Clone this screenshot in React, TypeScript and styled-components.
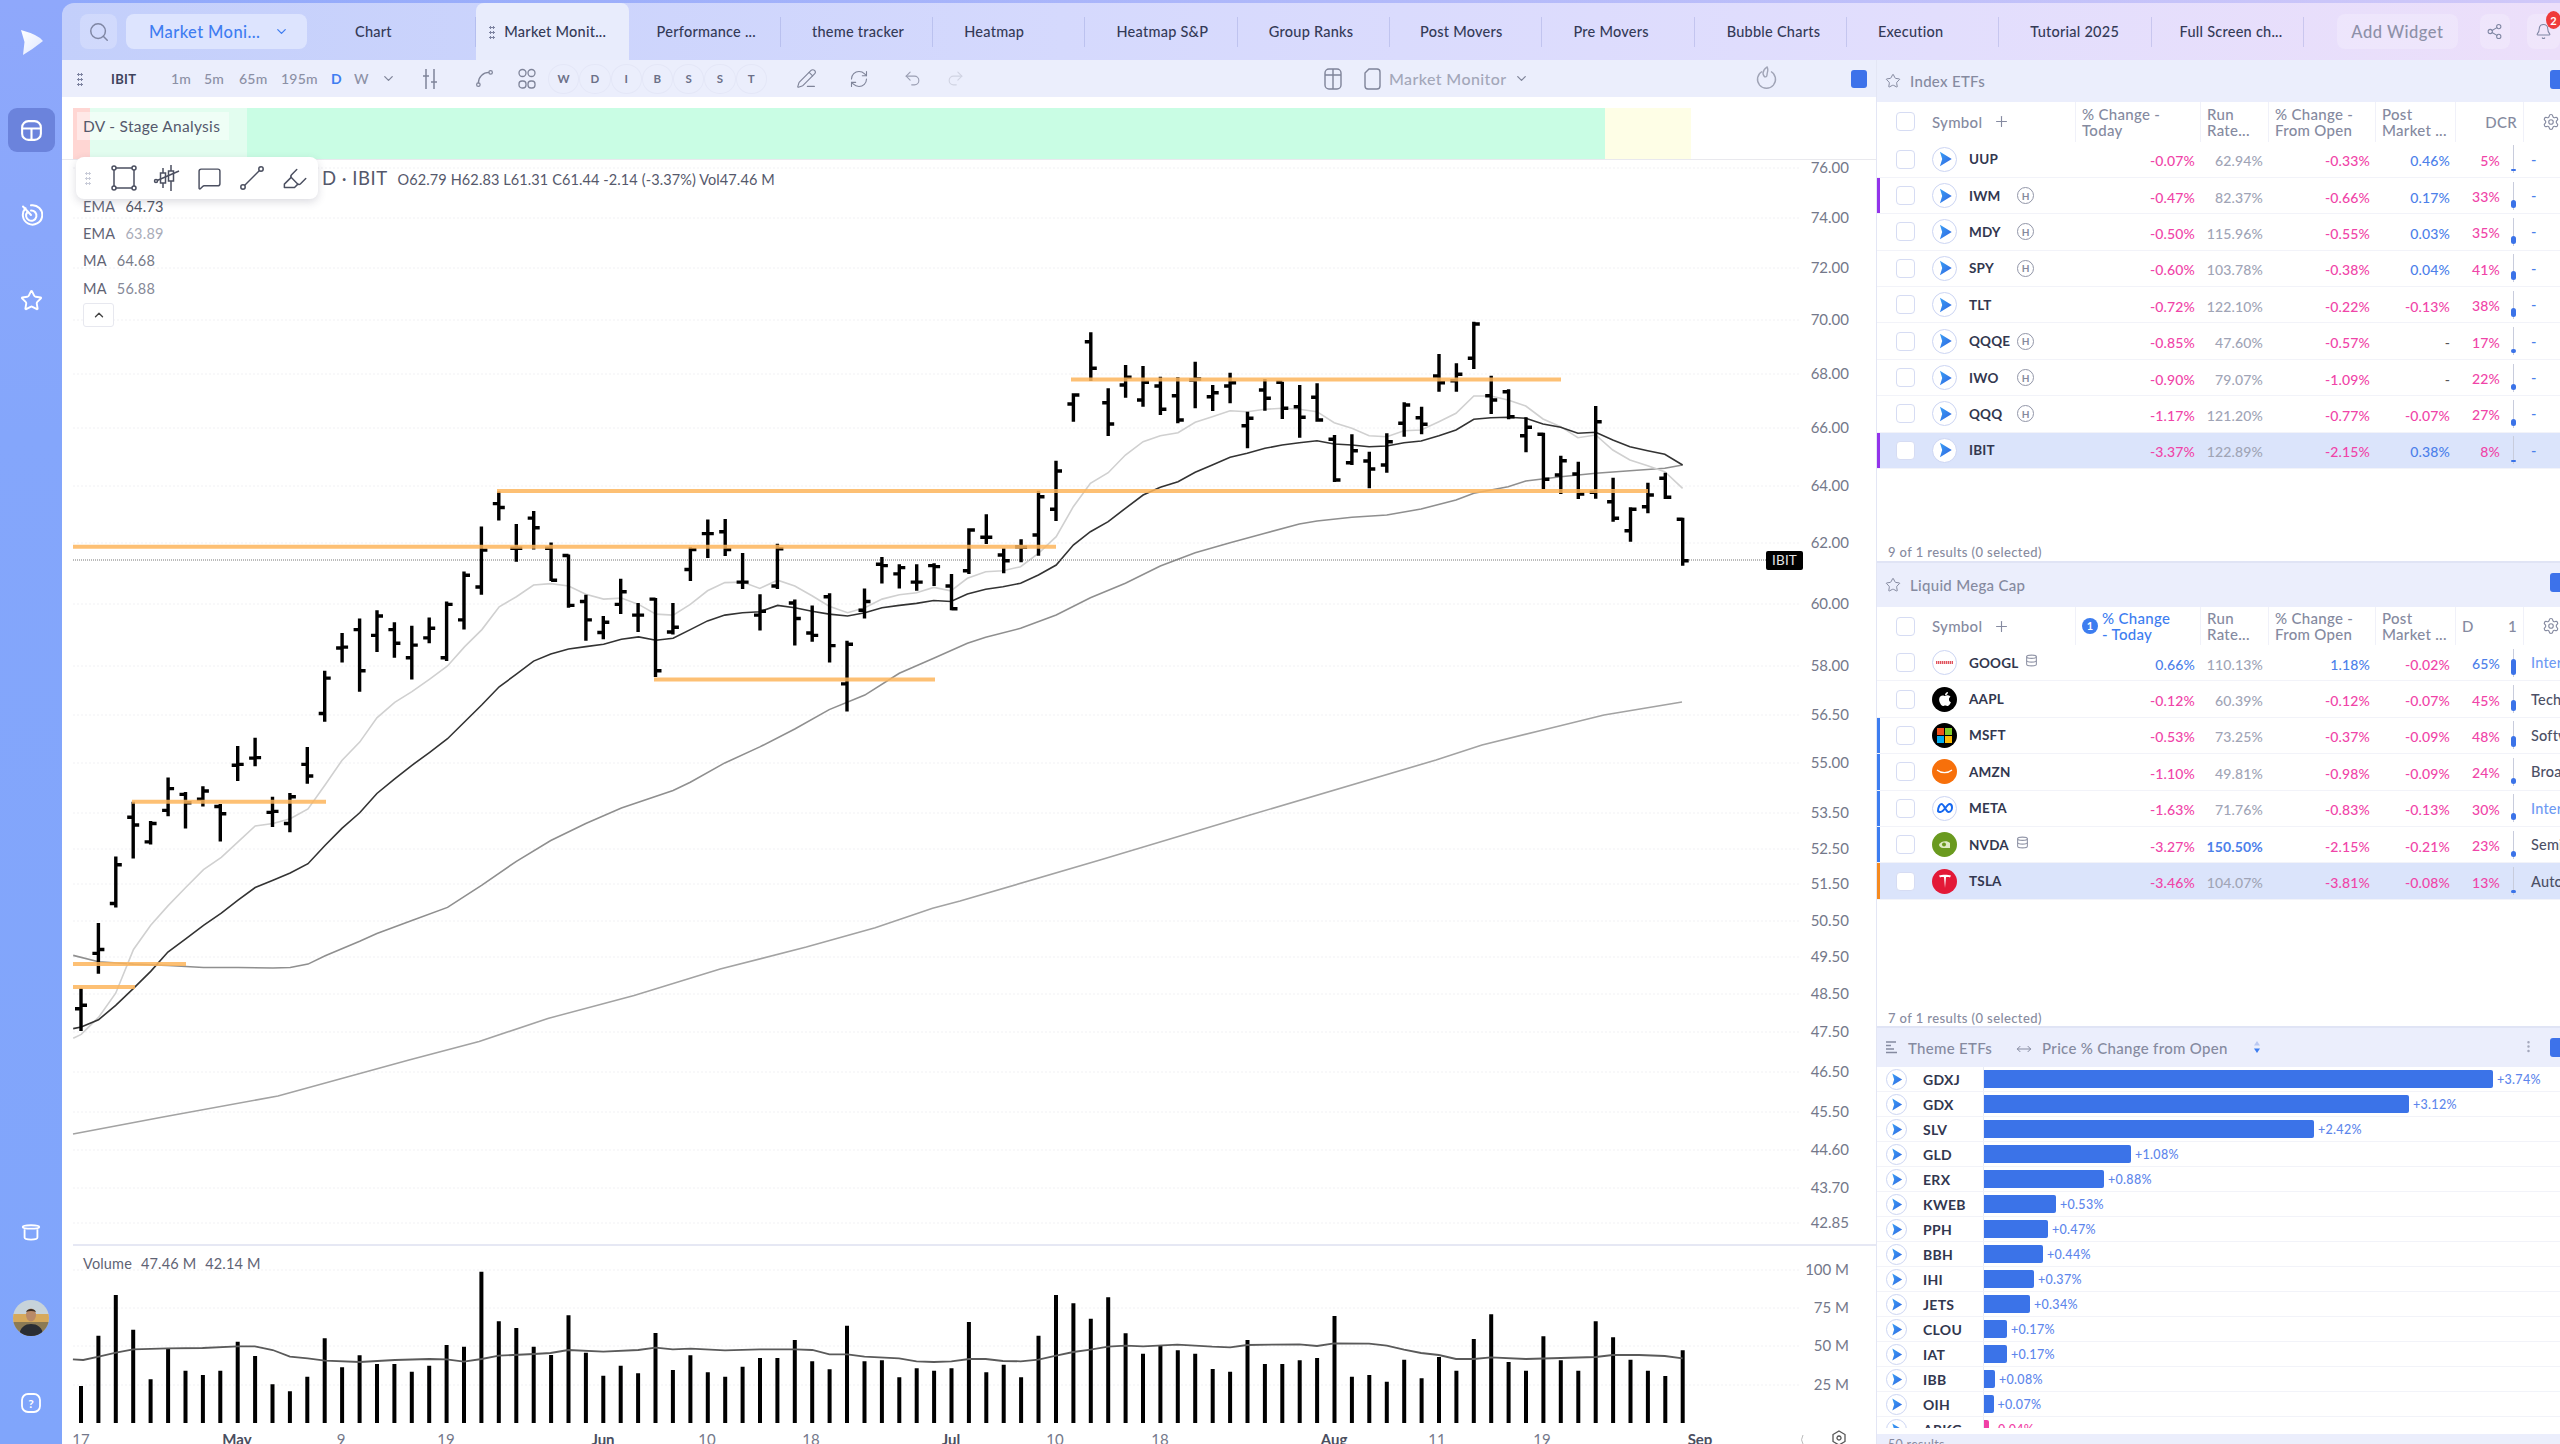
import React from "react";
import styled, { createGlobalStyle } from "styled-components";
import { Search, ChevronDown, ChevronUp, Share2, Bell, Star, MessageSquare, Highlighter, Spline, PencilLine, RefreshCw, Undo2, Redo2, Plus, Settings, EllipsisVertical, Database, MoveHorizontal } from "lucide-react";
import { FaApple } from "react-icons/fa";

const FONT = `"Lato", "Open Sans", sans-serif`;

const Global = createGlobalStyle`
  html, body { margin: 0; padding: 0; background: #fff; }
  body { font-family: ${FONT}; width: 2560px; height: 1444px; overflow: hidden; }
  * { box-sizing: border-box; }
`;

const Shell = styled.div`
  width: 2560px; height: 1444px; display: flex; overflow: hidden; background: #fff;
`;
const Rail = styled.nav`
  width: 62px; flex: none; height: 100%; background: linear-gradient(180deg, #8fa8fb 0%, #84a6fb 30%, #80a5fb 100%);
  display: flex; flex-direction: column; align-items: center; color: #fff;
`;
const RailLogo = styled.div`
  height: 62px; padding-top: 29px; margin-bottom: 46px; display: flex; align-items: flex-start; justify-content: center; width: 100%;
`;
const RailButton = styled.div<{ $active?: boolean; $mt?: number }>`
  width: 47px; height: 44px; border-radius: 9px; display: flex; align-items: center; justify-content: center;
  margin-top: ${(p) => p.$mt ?? 0}px;
  background: ${(p) => (p.$active ? "#6b83dc" : "transparent")};
`;
const Avatar = styled.div`
  width: 36px; height: 36px; border-radius: 50%; overflow: hidden; margin-top: 46px;
  svg { display: block; }
`;

const Main = styled.div`
  flex: 1; min-width: 0; height: 100%; display: flex; flex-direction: column;
  background: linear-gradient(90deg, #8fa8fb, #d0c8f9);
  padding-top: 3px;
`;
const TabBar = styled.header`
  height: 57px; flex: none; display: flex; align-items: center; border-radius: 12px 0 0 0;
  background: linear-gradient(90deg, #c3cffb 0%, #d5d9fd 40%, #e2defd 75%, #ecdffa 100%);
  padding-left: 18px;
`;
const GlassButton = styled.div<{ $w: number; $ml?: number }>`
  width: ${(p) => p.$w}px; margin-left: ${(p) => p.$ml ?? 0}px; height: 35px; flex: none; border-radius: 8px;
  background: rgba(255,255,255,.22); display: flex; align-items: center; justify-content: center; color: #7f86a3; position: relative;
`;
const MarketSelect = styled.div`
  width: 181px; margin-left: 9px; height: 35px; flex: none; border-radius: 8px; background: #dde4fe;
  color: #3f7df1; font-size: 16.5px; letter-spacing: .4px; font-weight: 500; display: flex; align-items: center; justify-content: space-between; padding: 0 18px 0 23px;
`;
const Tabs = styled.div`
  display: flex; height: 100%; margin-left: 17px;
`;
const Tab = styled.div<{ $active?: boolean; $pl: number }>`
  width: 152.3px; height: 100%; flex: none; position: relative; display: flex; align-items: center;
  padding-left: ${(p) => p.$pl}px; font-size: 14.5px; letter-spacing: .25px; font-weight: 500; color: #343a57; white-space: nowrap;
  background: ${(p) => (p.$active ? "#e8ecfc" : "transparent")};
  border-radius: ${(p) => (p.$active ? "8px 8px 0 0" : "0")};
  &::after {
    content: ""; position: absolute; right: 0; top: 14px; height: 30px; width: 1px; background: rgba(125,135,205,.28);
    display: ${(p) => (p.$active ? "none" : "block")};
  }
`;
const GripDots = styled.span<{ $c?: string; $mr?: number; $ml?: number }>`
  width: 6px; height: 14px; flex: none; margin-right: ${(p) => p.$mr ?? 0}px; margin-left: ${(p) => p.$ml ?? 0}px;
  background-image: radial-gradient(circle, ${(p) => p.$c ?? "#7d83a0"} 1px, transparent 1.2px);
  background-size: 3px 5px;
`;
const Actions = styled.div`
  display: flex; align-items: center; margin-left: 33px; flex: none;
`;
const AddWidget = styled(GlassButton)`
  font-size: 16.5px; letter-spacing: .5px; color: #8d90a8; font-weight: 500;
`;
const Badge = styled.span`
  position: absolute; top: -3px; right: -1px; width: 15px; height: 18px; border-radius: 50%; background: #ef3b3b; color: #fff;
  font-size: 11px; font-weight: 700; display: flex; align-items: center; justify-content: center;
`;

const Body = styled.div`
  flex: 1; min-height: 0; display: flex; background: #fff;
`;
const ChartColumn = styled.section`
  width: 1815px; flex: none; height: 100%; display: flex; flex-direction: column; position: relative; border-right: 1px solid #e3e6f5;
`;
const Toolbar = styled.div`
  height: 37px; flex: none; background: #ebeefc; display: flex; align-items: center; padding-left: 15px; color: #7f8499;
  font-size: 14px; font-weight: 500; letter-spacing: .25px;
`;
const Ticker = styled.span`
  margin-left: 28px; margin-right: 35px; font-weight: 700; color: #3e435c; width: 25px; font-size: 13px; letter-spacing: .3px;
`;
const Interval = styled.span<{ $on?: boolean; $w: number }>`
  width: ${(p) => p.$w}px; flex: none; color: ${(p) => (p.$on ? "#3f7df1" : "#8b90a5")}; font-weight: ${(p) => (p.$on ? 700 : 500)};
`;
const Slot = styled.span<{ $ml?: number; $w?: number; $c?: string }>`
  width: ${(p) => p.$w ?? 24}px; height: 24px; margin-left: ${(p) => p.$ml ?? 0}px; flex: none;
  display: flex; align-items: center; justify-content: center; color: ${(p) => p.$c ?? "#7f8499"};
`;
const LetterRound = styled.span`
  width: 31.3px; height: 30px; flex: none; border-radius: 50%; border: 1px solid #e4e7f7; display: flex; align-items: center; justify-content: center;
  font-size: 11.5px; font-weight: 700; color: #6b7088;
`;
const MuteLabel = styled.span`
  width: 122px; margin-left: 5px; flex: none; color: #a3a7b9; font-size: 16px; letter-spacing: .4px;
`;
const BlueSquare = styled.span<{ $ml?: number }>`
  width: 16px; height: 18px; border-radius: 3px; background: #3d72ea; flex: none; margin-left: ${(p) => p.$ml ?? 0}px;
`;

const StageStrip = styled.div`
  margin: 11px 184px 0 11px; height: 51px; flex: none; display: flex; position: relative;
`;
const StageBand = styled.div<{ $w: number; $c: string }>`
  width: ${(p) => p.$w}px; flex: none; height: 100%; background: ${(p) => p.$c};
`;
const StageRule = styled.div`
  height: 1px; background: #e9e9ee; flex: none;
`;
const StageTag = styled.span`
  position: absolute; left: 4px; top: 4px; width: 152px; height: 28px; background: rgba(255,255,255,.45); color: #55596c;
  font-size: 15.5px; letter-spacing: .3px; display: flex; align-items: center; padding-left: 6px; white-space: nowrap;
`;
const PricePane = styled.svg`
  display: block; flex: none; width: 1814px; height: 1084px;
`;
const Divider = styled.div`
  height: 2px; margin-left: 11px; background: #e6e8f4; flex: none;
`;
const VolumePane = styled.svg`
  display: block; flex: none; width: 1814px; height: 198px;
`;
const AxisText = styled.text<{ $bold?: boolean }>`
  font-family: ${FONT}; font-size: 15px; fill: ${(p) => (p.$bold ? "#4a4e60" : "#74788a")}; font-weight: ${(p) => (p.$bold ? 700 : 400)};
`;
const TagText = styled.text`
  font-family: ${FONT}; font-size: 13.5px; fill: #e5e5e5; letter-spacing: .2px;
`;
const VolumeTitle = styled.text`
  font-family: ${FONT}; font-size: 14.5px; fill: #5f6374; letter-spacing: .15px;
`;

const DrawTools = styled.div`
  position: absolute; left: 14px; top: 97px; width: 242px; height: 42px; background: #fff; border-radius: 8px;
  box-shadow: 0 3px 8px rgba(60,60,90,.18); display: flex; align-items: center; padding-left: 9px; color: #4b4f60;
  svg { flex: none; }
`;
const DrawSlot = styled.span`
  width: 42.5px; display: flex; justify-content: center;
`;
const Ohlc = styled.div`
  position: absolute; left: 260px; top: 107px; display: flex; align-items: baseline; white-space: pre; color: #55586b; font-size: 14.5px; letter-spacing: .1px;
`;
const OhlcTitle = styled.span`
  font-size: 18.5px; margin-right: 10px; letter-spacing: .5px;
`;
const Studies = styled.div`
  position: absolute; left: 21px; top: 133px; display: flex; flex-direction: column; align-items: flex-start;
`;
const StudyRow = styled.div`
  height: 27.2px; display: flex; gap: 10px; align-items: center; font-size: 14.5px; letter-spacing: .25px; color: #5f6374;
`;
const StudyValue = styled.span<{ $c: string }>`
  color: ${(p) => p.$c};
`;
const Collapse = styled.div`
  width: 31px; height: 24px; margin-top: 1px; border: 1px solid #e7e8ef; border-radius: 3px; background: #fff; display: flex; align-items: center; justify-content: center; color: #444;
`;

const SidePanel = styled.aside`
  flex: 1; min-width: 0; height: 100%; display: flex; flex-direction: column; overflow: hidden;
`;
const WatchPanel = styled.div<{ $h: number }>`
  height: ${(p) => p.$h}px; flex: none; display: flex; flex-direction: column; border-bottom: 2px solid #e0e4f5;
`;
const PanelHead = styled.div<{ $h: number }>`
  height: ${(p) => p.$h}px; flex: none; background: #ebeefc; display: flex; align-items: center; padding-left: 8px; color: #858aa0; font-size: 15px; letter-spacing: .3px; font-weight: 500; position: relative;
`;
const HeadTitle = styled.span<{ $ml?: number }>`
  margin-left: ${(p) => p.$ml ?? 9}px; white-space: nowrap; font-weight: 500;
`;
const PanelEdge = styled.span`
  position: absolute; right: 0; top: 10px; width: 10px; height: 19px; background: #3d72ea; border-radius: 3px 0 0 3px;
`;
const DotsAbs = styled.span`
  position: absolute; right: 24px; top: 11px; color: #a3a7ba; display: flex;
`;
const columns = "199px 125px 68px 107px 80px 68px 36px";
const HeadRow = styled.div<{ $h: number }>`
  height: ${(p) => p.$h}px; flex: none; display: grid; grid-template-columns: ${columns}; color: #858aa0; font-size: 15px; line-height: 16px; letter-spacing: .3px; font-weight: 500;
`;
const HeadCell = styled.div<{ $right?: boolean; $c?: string; $noLine?: boolean }>`
  display: flex; align-items: center; gap: 6px; padding: 0 ${(p) => (p.$noLine ? 0 : 6)}px 0 6px; overflow: hidden; color: ${(p) => p.$c ?? "inherit"};
  justify-content: ${(p) => (p.$right ? "flex-end" : "flex-start")};
  border-right: ${(p) => (p.$noLine ? "none" : "1px solid #f0f1f9")};
`;
const SymbolHead = styled(HeadCell)`
  padding-left: 19px; gap: 0;
`;
const HeadSymbol = styled.span`
  margin-left: 17px; margin-right: 11px; font-size: 15px;
`;
const Check = styled.span`
  width: 19px; height: 19px; flex: none; border: 1.5px solid #d6dcf3; border-radius: 4px; background: #fff;
`;
const SortBadge = styled.span`
  width: 16px; height: 16px; border-radius: 50%; background: #3d7df0; color: #fff; font-size: 11px; font-weight: 700; display: flex; align-items: center; justify-content: center; flex: none;
`;
const SortLabel = styled.span`
  width: 86px; flex: none; margin-left: -2px;
`;
const Row = styled.div<{ $accent?: string; $selected?: boolean }>`
  height: 36.4px; flex: none; display: grid; grid-template-columns: ${columns}; position: relative; align-items: center;
  background: ${(p) => (p.$selected ? "#dbe4fb" : "#fff")};
  border-bottom: 1px solid #f2f3f9;
  &::before {
    content: ""; position: absolute; left: 0; top: 0; bottom: 0; width: 3px; background: ${(p) => p.$accent ?? "transparent"};
  }
`;
const SymbolCell = styled.div`
  display: flex; align-items: center; padding-left: 19px; height: 100%; min-width: 0;
`;
const LogoRound = styled.span<{ $bg?: string; $line?: boolean }>`
  width: 25px; height: 25px; margin-left: 17px; margin-right: 12px; border-radius: 50%; flex: none; display: flex; align-items: center; justify-content: center; overflow: hidden;
  background: ${(p) => p.$bg ?? "#fff"};
  border: ${(p) => (p.$line ? "1px solid #ccd5f3" : "none")};
`;
const Symbol = styled.span<{ $fixed?: boolean }>`
  font-size: 13.5px; font-weight: 700; color: #32374f; letter-spacing: .2px; min-width: ${(p) => (p.$fixed ? 48 : 0)}px; white-space: nowrap;
`;
const HBadge = styled.span`
  width: 17px; height: 17px; border-radius: 50%; border: 1.5px solid #9296a8; color: #868a9d; font-size: 10px; font-weight: 700; display: flex; align-items: center; justify-content: center; flex: none;
`;
const DbMark = styled.span`
  margin-left: 7px; margin-top: -4px; color: #9296a8; display: flex;
`;
const Num = styled.div<{ $c: string; $w?: number }>`
  text-align: right; padding: 3px 6px 0 0; font-size: 14px; letter-spacing: .15px; color: ${(p) => p.$c}; font-weight: ${(p) => p.$w ?? 500};
`;
const DcrCell = styled.div`
  display: flex; align-items: center; justify-content: flex-end; padding-right: 8px; height: 100%; gap: 11px;
`;
const DcrValue = styled.span<{ $c: string }>`
  font-size: 14px; letter-spacing: .15px; color: ${(p) => p.$c}; font-weight: 500; padding-top: 2px;
`;
const DcrTrack = styled.span`
  width: 5px; height: 28px; display: flex; align-items: flex-end; justify-content: center; position: relative;
  background: linear-gradient(#c8ccdc, #c8ccdc) center / 1px 100% no-repeat;
`;
const DcrFill = styled.span`
  width: 5px; margin-bottom: 2px; border-radius: 3px; background: #3b73e8; display: block;
`;
const TailCell = styled.div<{ $c: string }>`
  padding-left: 7px; white-space: nowrap; overflow: hidden; font-size: 14.5px; color: ${(p) => p.$c}; letter-spacing: .2px; font-weight: 500;
`;
const Spacer = styled.div`
  flex: 1;
`;
const ResultsLine = styled.div<{ $pb: number }>`
  padding: 0 0 ${(p) => p.$pb}px 11px; font-size: 13px; color: #878ba0; letter-spacing: .4px; font-weight: 500; line-height: 14px;
`;
const ThemePanel = styled.div`
  flex: 1; min-height: 0; display: flex; flex-direction: column;
`;
const ThemeRows = styled.div`
  height: 361px; flex: none; overflow: hidden;
`;
const ThemeRow = styled.div`
  height: 25px; display: flex; align-items: center; border-bottom: 1px solid #f2f3f9;
`;
const ThemeName = styled.div`
  width: 107px; height: 100%; flex: none; display: flex; align-items: center; padding-left: 9px; border-right: 1px solid #e9ebf5; font-size: 14px; font-weight: 700; color: #32374f; letter-spacing: .3px;
`;
const MiniPlay = styled.span`
  width: 21px; height: 21px; margin-right: 16px; border-radius: 50%; border: 1px solid #ccd5f3; display: flex; align-items: center; justify-content: center; flex: none;
`;
const ThemeBar = styled.span<{ $neg?: boolean }>`
  height: 18px; border-radius: 0 2px 2px 0; flex: none; background: ${(p) => (p.$neg ? "#f13fa6" : "#3b73e8")};
`;
const ThemeValue = styled.span<{ $neg?: boolean }>`
  margin-left: 4px; font-size: 12.5px; letter-spacing: .3px; font-weight: 500; color: ${(p) => (p.$neg ? "#f13fa6" : "#5d86ec")};
`;
const ThemeFoot = styled.div`
  margin-top: 6px; flex: 1; background: #ebeefc; padding: 3px 0 0 11px; font-size: 12.5px; color: #878ba0; letter-spacing: .3px;
`;

/* ---- chart data, in page pixels ---- */
const y8 = (v: number) => 300 + v / 2.063;
const y9 = (v: number) => 300 + v / 3;
const x8 = (v: number) => 60 + v / 1.742;
const x9 = (v: number) => 900 + v / 1.633;
const barX = (i: number) => 81 + i * 17.41;

const barsA = [[1420,1508,1462,1455],[1285,1390,1348,1340],[1148,1253,1245,1165],[1035,1152,1067,1083],[1075,1123,1118,1080],[985,1065,1053,1008],[1015,1090,1020,1037],[1003,1045,1030,1013],[1040,1117,1045,1060],[920,992,960,958],[903,962,945,944],[1025,1087,1057,1055],[1017,1098,1080,1025],[922,998,958,982],[765,870,853,780],[687,748,718,716],[657,808,680,765],[640,726,692,652],[665,738,680,708],[672,783,738,712],[655,708,697,677],[622,745,738,628],[560,680,660,568],[467,608,592,516],[395,455,420,428],[462,540,512,512],[435,515,450,470],[500,580,512,578],[525,635,527,630],[608,703,622,660],[652,700,686,665],[575,648,628,602],[625,685,650,650],[615,778,617,765],[625,690,685,675],[510,580,556,515],[453,532,482,482],[452,528,478,515],[522,596,582,582],[607,682,650,642],[503,596,590,513],[618,713,625,657],[630,705,687,692],[605,748,612,713],[703,849,792,710],[595,657,640,622],[530,585,545,548],[545,595,565,552],[545,600,582,582],[543,590,548,550],[565,640,590,637]];
const barsB = [[685,822,812,690],[643,732,712,712],[745,820,765,782],[718,787,740,742],[572,767,705,590],[482,663,628,513],[280,365,312,285],[97,243,125,205],[265,408,308,372],[195,293,255,232],[198,320,300,247],[230,345,258,328],[232,370,287,360],[185,325,240,237],[255,333,290,278],[218,310,258,248],[335,445,377,355],[237,332,270,295],[245,357,247,325],[255,413,320,352],[250,365,292,360],[405,546,418,540],[403,495,488,452],[455,565,483,507],[400,518,495,425],[307,410,370,315],[320,403,353,373],[162,275,228,248],[190,275,242,223],[65,207,175,72],[227,342,287,300],[268,358,275,350],[352,457,407,382],[398,567,403,538],[467,582,525,482],[485,597,522,582],[318,596,577,365],[533,665,605,655],[622,725,692,628],[548,640,620,585],[518,597,535,592],[653,797,658,782]];
const bars = [...barsA.map((b) => b.map(y8)), ...barsB.map((b) => b.map(y9))];
const barPath = bars.map(([h, l, o, c], i) => {
  const x = barX(i);
  return `M${x.toFixed(1)} ${h.toFixed(1)}V${l.toFixed(1)}M${(x - 6).toFixed(1)} ${o.toFixed(1)}H${x.toFixed(1)}M${x.toFixed(1)} ${c.toFixed(1)}H${(x + 6).toFixed(1)}`;
}).join("");

const line = (a: number[][], b: number[][], before: number[][] = [], after: number[][] = []) =>
  [...before, ...a.map(([x, y]) => [x8(x), y8(y)]), ...b.map(([x, y]) => [x9(x), y9(y)]), ...after]
    .map(([x, y]) => `${x.toFixed(1)},${y.toFixed(1)}`).join(" ");

const emaLight = line([[23,1523],[37,1515],[67,1480],[97,1430],[128,1340],[158,1290],[188,1250],[219,1212],[250,1175],[281,1150],[310,1118],[340,1085],[371,1080],[401,1070],[432,1050],[462,1000],[491,950],[522,912],[552,862],[583,830],[613,808],[644,782],[675,755],[705,715],[735,680],[765,633],[795,612],[825,588],[855,585],[886,590],[916,607],[947,617],[978,615],[1008,628],[1038,648],[1068,650],[1098,628],[1128,600],[1158,583],[1189,582],[1219,595],[1250,578],[1280,590],[1310,610],[1340,632],[1372,645],[1402,635],[1432,617],[1462,608],[1492,604],[1522,593],[1552,600]],
  [[110,835],[140,815],[168,812],[197,800],[226,760],[255,710],[283,620],[311,550],[340,518],[368,465],[397,425],[425,407],[454,398],[482,367],[510,350],[539,332],[567,335],[596,328],[624,325],[652,328],[681,335],[709,368],[738,385],[766,407],[795,410],[823,392],[851,390],[880,365],[908,340],[937,288],[965,288],[993,300],[1022,318],[1050,357],[1079,380],[1107,413],[1136,405],[1164,450],[1192,480],[1221,497],[1249,515],[1278,565]]);
const emaDark = line([[23,1503],[37,1500],[67,1485],[97,1455],[128,1420],[158,1385],[188,1345],[219,1318],[250,1290],[281,1265],[310,1238],[340,1212],[371,1197],[401,1182],[432,1163],[462,1125],[491,1090],[522,1058],[552,1018],[583,988],[613,960],[644,933],[675,905],[705,870],[735,835],[765,798],[795,772],[825,745],[855,730],[886,720],[916,715],[947,710],[978,700],[1008,695],[1038,702],[1068,698],[1098,680],[1128,662],[1158,650],[1189,645],[1219,643],[1250,630],[1280,635],[1310,642],[1340,648],[1372,652],[1402,645],[1432,635],[1462,630],[1492,626],[1522,620],[1552,622]],
  [[110,882],[140,868],[168,860],[197,850],[226,825],[255,795],[283,735],[311,695],[340,665],[368,625],[397,585],[425,562],[454,545],[482,517],[510,495],[539,472],[567,460],[596,445],[624,435],[652,428],[681,422],[709,432],[738,435],[766,440],[795,438],[823,428],[851,423],[880,407],[908,390],[937,358],[965,353],[993,352],[1022,355],[1050,372],[1079,382],[1107,400],[1136,397],[1164,420],[1192,440],[1221,452],[1249,463],[1278,495]]);
const maMid = line([[23,1352],[67,1365],[128,1370],[188,1373],[250,1377],[310,1377],[371,1378],[401,1377],[432,1370],[462,1353],[522,1323],[552,1307],[613,1280],[675,1253],[735,1207],[795,1158],[855,1115],[916,1080],[978,1048],[1068,1012],[1098,995],[1158,955],[1219,922],[1280,885],[1340,845],[1402,815],[1462,770]],
  [[55,1075],[110,1030],[140,1012],[197,985],[255,945],[311,893],[368,850],[425,798],[482,758],[539,728],[596,700],[652,672],[681,663],[738,652],[795,645],[851,627],[908,600],[937,580],[993,560],[1022,543],[1079,530],[1136,520],[1192,512],[1249,505],[1278,495]]);
const maLong = line([[608,1568],[730,1530],[850,1482],[1000,1435],[1150,1380],[1300,1335],[1420,1295],[1520,1255],[1568,1240]],
  [],
  [[73,1134],[163,1117],[278,1096]],
  [[1100,860],[1250,815],[1436,760],[1482,745],[1543,730],[1604,715],[1682,702]]);

const priceTicks: [string, number][] = [["76.00",168],["74.00",218],["72.00",268],["70.00",320],["68.00",374],["66.00",428],["64.00",486],["62.00",543],["60.00",604],["58.00",666],["56.50",715],["55.00",763],["53.50",813],["52.50",849],["51.50",884],["50.50",921],["49.50",957],["48.50",994],["47.50",1032],["46.50",1072],["45.50",1112],["44.60",1150],["43.70",1188],["42.85",1223]];
const levels = [[546.7,73,1056],[491,497,1648],[379.5,1071,1561],[679.5,654,935],[801.7,132,326],[964,73,186],[987,73,135]];

const volA = [618,467,345,449,598,507,572,585,572,485,528,613,634,590,475,562,526,552,552,575,557,495,500,275,424,444,500,525,406,518,587,557,580,459,570,526,577,590,560,534,534,480,544,568,437,544,541,592];
const volB = [565,572,565,426,577,554,592,467,345,370,416,352,460,521,497,511,521,567,575,480,552,552,541,534,408,590,585,605,539,595,531,572,477,403,546,572,469,541,572,424,472,539,572,588,511];
const volTops = [...volA, ...volB].map((v) => 1180 + v / 3);
const volPath = volTops.map((t, i) => `M${barX(i).toFixed(1)} ${t.toFixed(1)}V1423`).join("");
const volAvgA = [[127,538],[145,540],[172,530],[202,518],[232,508],[293,505],[353,504],[414,499],[444,499],[475,510],[505,530],[536,535],[566,542],[627,546],[688,540],[748,537],[778,538],[808,545],[839,537],[869,527],[930,522],[959,519],[990,510],[1051,515],[1112,510],[1142,503],[1172,508],[1203,506],[1263,511],[1324,508],[1385,508],[1415,510],[1445,523],[1476,523],[1506,530],[1566,535]];
const volAvgB = [[27,544],[55,546],[84,544],[113,537],[140,537],[168,543],[197,544],[226,539],[255,527],[283,516],[311,509],[340,500],[368,497],[397,499],[453,494],[510,500],[539,502],[567,495],[652,493],[681,498],[709,490],[766,491],[795,497],[823,509],[851,519],[880,525],[908,537],[937,537],[965,532],[1022,537],[1079,534],[1136,531],[1164,525],[1207,525],[1249,528],[1278,535]];
const volAvg = [...volAvgA.map(([x, y]) => [x / 1.742, 1180 + y / 3]), ...volAvgB.map(([x, y]) => [x9(x), 1180 + y / 3])].map(([x, y]) => `${x.toFixed(1)},${y.toFixed(1)}`).join(" ");
const volTicks: [string, number][] = [["100 M",1270],["75 M",1308],["50 M",1346],["25 M",1385]];
const timeTicks: [string, number, boolean][] = [["17",81,false],["May",237,true],["9",341,false],["19",446,false],["Jun",603,true],["10",707,false],["18",811,false],["Jul",951,true],["10",1055,false],["18",1160,false],["Aug",1334,true],["11",1437,false],["19",1542,false],["Sep",1700,true]];

/* ---- table data ---- */
const PINK = "#f044a8";
const BLUE = "#4c80ea";
const GREY = "#a0a4b6";
const tone = (v: string) => (v === "-" ? "#555" : v.startsWith("-") ? PINK : BLUE);

type Rec = { s: string; h?: boolean; db?: boolean; a: string; r: string; rHot?: boolean; o: string; p: string; d: number; dHot?: boolean; tail?: string; tailHot?: boolean; accent?: string; sel?: boolean; logo?: string };
const indexRows: Rec[] = [
  { s: "UUP", a: "-0.07%", r: "62.94%", o: "-0.33%", p: "0.46%", d: 5 },
  { s: "IWM", h: true, a: "-0.47%", r: "82.37%", o: "-0.66%", p: "0.17%", d: 33, accent: "#9333ea" },
  { s: "MDY", h: true, a: "-0.50%", r: "115.96%", o: "-0.55%", p: "0.03%", d: 35 },
  { s: "SPY", h: true, a: "-0.60%", r: "103.78%", o: "-0.38%", p: "0.04%", d: 41 },
  { s: "TLT", a: "-0.72%", r: "122.10%", o: "-0.22%", p: "-0.13%", d: 38 },
  { s: "QQQE", h: true, a: "-0.85%", r: "47.60%", o: "-0.57%", p: "-", d: 17 },
  { s: "IWO", h: true, a: "-0.90%", r: "79.07%", o: "-1.09%", p: "-", d: 22 },
  { s: "QQQ", h: true, a: "-1.17%", r: "121.20%", o: "-0.77%", p: "-0.07%", d: 27 },
  { s: "IBIT", a: "-3.37%", r: "122.89%", o: "-2.15%", p: "0.38%", d: 8, accent: "#9333ea", sel: true },
];
const megaRows: Rec[] = [
  { s: "GOOGL", db: true, logo: "googl", a: "0.66%", r: "110.13%", o: "1.18%", p: "-0.02%", d: 65, dHot: true, tail: "Internet Content", tailHot: true },
  { s: "AAPL", logo: "aapl", a: "-0.12%", r: "60.39%", o: "-0.12%", p: "-0.07%", d: 45, tail: "Technology" },
  { s: "MSFT", logo: "msft", a: "-0.53%", r: "73.25%", o: "-0.37%", p: "-0.09%", d: 48, tail: "Software", accent: "#3d7df0" },
  { s: "AMZN", logo: "amzn", a: "-1.10%", r: "49.81%", o: "-0.98%", p: "-0.09%", d: 24, tail: "Broadline", accent: "#3d7df0" },
  { s: "META", logo: "meta", a: "-1.63%", r: "71.76%", o: "-0.83%", p: "-0.13%", d: 30, tail: "Internet Content", tailHot: true, accent: "#3d7df0" },
  { s: "NVDA", db: true, logo: "nvda", a: "-3.27%", r: "150.50%", rHot: true, o: "-2.15%", p: "-0.21%", d: 23, tail: "Semiconductors", accent: "#3d7df0" },
  { s: "TSLA", logo: "tsla", a: "-3.46%", r: "104.07%", o: "-3.81%", p: "-0.08%", d: 13, tail: "Auto Manufacturers", accent: "#f58a1f", sel: true },
];
const themes: [string, number, string][] = [["GDXJ",509,"+3.74%"],["GDX",425,"+3.12%"],["SLV",330,"+2.42%"],["GLD",147,"+1.08%"],["ERX",120,"+0.88%"],["KWEB",72,"+0.53%"],["PPH",64,"+0.47%"],["BBH",59,"+0.44%"],["IHI",50,"+0.37%"],["JETS",46,"+0.34%"],["CLOU",23,"+0.17%"],["IAT",23,"+0.17%"],["IBB",11,"+0.08%"],["OIH",9.5,"+0.07%"],["ARKG",5,"-0.04%"]];
const tabs: [string, number][] = [["Chart",31],["Market Monit...",29],["Performance ...",28],["theme tracker",31],["Heatmap",31],["Heatmap S&P",31],["Group Ranks",31],["Post Movers",30],["Pre Movers",31],["Bubble Charts",32],["Execution",31],["Tutorial 2025",31],["Full Screen ch...",28]];

/* ---- drawings ---- */
const PlayMark = ({ size = 18 }: { size?: number }) => (
  <svg width={size} height={size} viewBox="0 0 16 16">
    <defs>
      <linearGradient id="playFill" x1="0" y1="0" x2="1" y2="1"><stop offset="0" stopColor="#3aa0f5" /><stop offset="1" stopColor="#2f62e0" /></linearGradient>
    </defs>
    <path d="M3.500 1.500 L14 8 L3.500 14.500 L5.500 8 Z" fill="url(#playFill)" />
  </svg>
);
const Logo = ({ kind }: { kind?: string }) => {
  switch (kind) {
    case "googl":
      return <LogoRound $line><svg width="17" height="5" viewBox="0 0 17 5"><path d="M0 2.5h17" stroke="#e0525c" strokeWidth="3" strokeDasharray="1.4 .6" /></svg></LogoRound>;
    case "aapl":
      return <LogoRound $bg="#000"><FaApple size={16} color="#fff" /></LogoRound>;
    case "msft":
      return <LogoRound $bg="#000"><svg width="15" height="15" viewBox="0 0 15 15"><rect width="7" height="7" fill="#f1511b" /><rect x="8" width="7" height="7" fill="#80cc28" /><rect y="8" width="7" height="7" fill="#00adef" /><rect x="8" y="8" width="7" height="7" fill="#fbbc09" /></svg></LogoRound>;
    case "amzn":
      return <LogoRound $bg="#f7700b"><svg width="17" height="8" viewBox="0 0 17 8"><path d="M1 2c4 3.5 11 3.5 15 0" stroke="#fff" strokeWidth="1.2" fill="none" /></svg></LogoRound>;
    case "meta":
      return <LogoRound $line><svg width="18" height="12" viewBox="0 0 18 12"><path d="M2 9c0-4 2-7 3.5-7C8 2 10 10 12.500 10 15 10 16 7 16 5.500 16 3.500 15 2 13.500 2 11 2 8 10 4.500 10 3 10 2 9.800 2 9z" stroke="#1668f0" strokeWidth="2" fill="none" /></svg></LogoRound>;
    case "nvda":
      return <LogoRound $bg="#6a9a1f"><svg width="13" height="11" viewBox="0 0 13 11"><path d="M1 5.500C3 2 9 1 12 4v5H5C3 9 1 7.500 1 5.500z" fill="#dfeac4" /><circle cx="6" cy="5.500" r="2" fill="#6a9a1f" /></svg></LogoRound>;
    case "tsla":
      return <LogoRound $bg="#e31937"><svg width="14" height="15" viewBox="0 0 14 15"><path d="M1 1.500C4 .500 10 .500 13 1.500L12 3.500C11 3 9 3 8 3.200L7 14 6 3.200C5 3 3 3 2 3.500Z" fill="#fff" /></svg></LogoRound>;
    default:
      return <LogoRound $line><PlayMark /></LogoRound>;
  }
};
const DashIcon = () => (
  <svg width="25" height="25" viewBox="0 0 24 24" fill="none" stroke="#fff" strokeWidth="2"><rect x="3" y="3" width="18" height="18" rx="6" /><path d="M3 10h18M12 10v11" /></svg>
);
const RadarIcon = () => (
  <svg width="24" height="24" viewBox="0 0 24 24" fill="none" stroke="#fff" strokeWidth="2" strokeLinecap="round"><path d="M6.500 5.200A9.700 9.700 0 1 0 12 2.300" /><path d="M8.500 9a5.200 5.200 0 1 0 3.500-1.600" /><path d="M12 12 4 3.500" /></svg>
);
const BucketIcon = () => (
  <svg width="22" height="22" viewBox="0 0 24 24" fill="none" stroke="#fff" strokeWidth="2" strokeLinejoin="round"><path d="M3 6.500C3 4 21 4 21 6.500 21 9 3 9 3 6.500z" /><path d="M5 9v9c0 3 14 3 14 0V9" /></svg>
);
const HelpIcon = () => (
  <svg width="22" height="22" viewBox="0 0 22 22" fill="none"><rect x="2" y="2" width="18" height="18" rx="6" stroke="#fff" strokeWidth="1.8" /><text x="11" y="15.500" textAnchor="middle" fontSize="12" fontWeight="700" fill="#fff" fontFamily="Lato, sans-serif">?</text></svg>
);
const BrandMark = () => (
  <svg width="25" height="27" viewBox="0 0 25 27"><defs><linearGradient id="brand" x1="0" y1="0" x2="1" y2="1"><stop offset="0" stopColor="#fff" /><stop offset="1" stopColor="#dfe7ff" /></linearGradient></defs><path d="M2 1 Q20 6 24 12 Q14 20 4 26 L5.500 13 Z" fill="url(#brand)" /></svg>
);
const AvatarArt = () => (
  <svg width="36" height="36" viewBox="0 0 36 36"><rect width="36" height="36" fill="#c7d3da" /><rect y="14" width="36" height="8" fill="#d6a95c" /><rect y="22" width="36" height="14" fill="#8b7a55" /><path d="M6 36c1-9 6-12 12-12s12 3 12 12z" fill="#2a2d33" /><ellipse cx="18" cy="15" rx="5" ry="6.500" fill="#b98a68" /><path d="M13 12c1-4 9-4 10 0-3-1.500-7-1.500-10 0z" fill="#3a2d22" /></svg>
);
const RectNodes = () => (
  <svg width="26" height="26" viewBox="0 0 26 26" fill="none" stroke="currentColor" strokeWidth="1.500"><rect x="3" y="3" width="20" height="20" /><g fill="#fff"><circle cx="3" cy="3" r="2" /><circle cx="23" cy="3" r="2" /><circle cx="3" cy="23" r="2" /><circle cx="23" cy="23" r="2" /></g></svg>
);
const CandleTool = () => (
  <svg width="28" height="28" viewBox="0 0 28 28" fill="none" stroke="currentColor" strokeWidth="1.500"><path d="M10 4v20M18 1v26" /><rect x="7.500" y="9" width="5" height="10" fill="#fff" /><rect x="15.500" y="7" width="5" height="10" fill="#fff" /><path d="M3 17 26 7" /><circle cx="3" cy="17" r="1.500" fill="#fff" /></svg>
);
const SegmentTool = () => (
  <svg width="26" height="26" viewBox="0 0 26 26" fill="none" stroke="currentColor" strokeWidth="1.500"><path d="M5.500 20.500 20.500 5.500" /><circle cx="4" cy="22" r="2.200" fill="#fff" /><circle cx="22" cy="4" r="2.200" fill="#fff" /></svg>
);
const BarsIcon = () => (
  <svg width="20" height="22" viewBox="0 0 20 22" fill="none" stroke="currentColor" strokeWidth="1.500"><path d="M6 1v20M14 1v20M3 8h6M11 14h6" /></svg>
);
const GridDots = () => (
  <svg width="20" height="22" viewBox="0 0 20 22" fill="none" stroke="currentColor" strokeWidth="1.300"><circle cx="5.500" cy="5" r="3.500" /><circle cx="14.500" cy="5" r="3.500" /><rect x="2" y="13" width="7" height="7" rx="3" /><rect x="11" y="13" width="7" height="7" rx="3" /></svg>
);
const TableIcon = () => (
  <svg width="22" height="24" viewBox="0 0 22 24" fill="none" stroke="currentColor" strokeWidth="1.400"><rect x="3" y="2" width="16" height="20" rx="4" /><path d="M3 8h16M11 2v20" /></svg>
);
const ShapeIcon = () => (
  <svg width="20" height="24" viewBox="0 0 20 24" fill="none" stroke="currentColor" strokeWidth="1.400"><path d="M3 6 7 2h8a3 3 0 0 1 3 3v14a3 3 0 0 1-3 3H6a3 3 0 0 1-3-3z" /></svg>
);
const FlameDial = () => (
  <svg width="22" height="26" viewBox="0 0 22 26" fill="none" stroke="currentColor" strokeWidth="1.400"><path d="M7 5.500a9 9 0 1 0 9 0" /><path d="M12 1c-4 3-5 6-3 9 1 1.500 3 1 3-1 0-3 2-5 0-8z" /></svg>
);
const SortArrows = ({ c = "#3d7df0" }: { c?: string }) => (
  <svg width="8" height="14" viewBox="0 0 8 14"><path d="M4 1 7 5.500H1z" fill="#b9c8f2" /><path d="M4 13 1 8.500h6z" fill={c} /></svg>
);
const ThemeGlyph = () => (
  <svg width="14" height="16" viewBox="0 0 14 16" stroke="currentColor" strokeWidth="1.500"><path d="M1 2h10M1 5.500h5M1 9h8M1 12.500h11" /></svg>
);

const Dcr = ({ v, hot }: { v: number; hot?: boolean }) => (
  <DcrCell>
    <DcrValue $c={hot ? BLUE : PINK}>{v}%</DcrValue>
    <DcrTrack><DcrFill style={{ height: Math.max(2, v * 0.24) }} /></DcrTrack>
  </DcrCell>
);

const TableRow = ({ r, tailMode }: { r: Rec; tailMode?: boolean }) => (
  <Row $accent={r.accent} $selected={r.sel}>
    <SymbolCell>
      <Check />
      <Logo kind={r.logo} />
      <Symbol $fixed={!r.db}>{r.s}</Symbol>
      {r.h && <HBadge>H</HBadge>}
      {r.db && <DbMark><Database size={13} /></DbMark>}
    </SymbolCell>
    <Num $c={tone(r.a)}>{r.a}</Num>
    <Num $c={r.rHot ? BLUE : GREY} $w={r.rHot ? 700 : 500}>{r.r}</Num>
    <Num $c={tone(r.o)}>{r.o}</Num>
    <Num $c={tone(r.p)}>{r.p}</Num>
    <Dcr v={r.d} hot={r.dHot} />
    <TailCell $c={r.tailHot ? "#6f9bf3" : tailMode ? "#4c5066" : BLUE}>{r.tail ?? "-"}</TailCell>
  </Row>
);

const Grid = ({ ticks }: { ticks: [string, number][] }) => (
  <>
    {ticks.map(([t, y]) => (
      <g key={t}>
        <line x1="73" x2="1800" y1={y} y2={y} stroke="#f1f1f4" strokeWidth="1" strokeDasharray="2 2" />
        <AxisText x="1849" y={y + 5} textAnchor="end">{t}</AxisText>
      </g>
    ))}
  </>
);

export default function App() {
  return (
    <Shell>
      <Global />
      <Rail>
        <RailLogo><BrandMark /></RailLogo>
        <RailButton $active><DashIcon /></RailButton>
        <RailButton $mt={41}><RadarIcon /></RailButton>
        <RailButton $mt={41}><Star size={23} strokeWidth={2} /></RailButton>
        <RailButton $mt={888}><BucketIcon /></RailButton>
        <Avatar><AvatarArt /></Avatar>
        <RailButton $mt={45}><HelpIcon /></RailButton>
      </Rail>
      <Main>
        <TabBar>
          <GlassButton $w={37}><Search size={22} strokeWidth={1.6} /></GlassButton>
          <MarketSelect>Market Moni... <ChevronDown size={15} /></MarketSelect>
          <Tabs>
            {tabs.map(([t, pl], i) => (
              <Tab key={t} $pl={pl} $active={i === 1}>
                {i === 1 && <GripDots $mr={9} $ml={-16} />}
                {t}
              </Tab>
            ))}
          </Tabs>
          <Actions>
            <AddWidget $w={121}>Add Widget</AddWidget>
            <GlassButton $w={30} $ml={22}><Share2 size={17} strokeWidth={1.5} /></GlassButton>
            <GlassButton $w={33} $ml={17}><Bell size={17} strokeWidth={1.5} /><Badge>2</Badge></GlassButton>
          </Actions>
        </TabBar>
        <Body>
          <ChartColumn>
            <Toolbar>
              <GripDots />
              <Ticker>IBIT</Ticker>
              <Interval $w={33}>1m</Interval>
              <Interval $w={35}>5m</Interval>
              <Interval $w={42}>65m</Interval>
              <Interval $w={50}>195m</Interval>
              <Interval $w={23} $on>D</Interval>
              <Interval $w={22}>W</Interval>
              <Slot><ChevronDown size={15} /></Slot>
              <Slot $ml={18}><BarsIcon /></Slot>
              <Slot $ml={30}><Spline size={21} strokeWidth={1.4} /></Slot>
              <Slot $ml={19}><GridDots /></Slot>
              <Slot $ml={9} $w={219}>
                {"WDIBSST".split("").map((l, i) => <LetterRound key={i}>{l}</LetterRound>)}
              </Slot>
              <Slot $ml={27}><PencilLine size={21} strokeWidth={1.3} /></Slot>
              <Slot $ml={29}><RefreshCw size={20} strokeWidth={1.3} /></Slot>
              <Slot $ml={29} $c="#9a9eb2"><Undo2 size={19} strokeWidth={1.4} /></Slot>
              <Slot $ml={19} $c="#d0d3e2"><Redo2 size={19} strokeWidth={1.4} /></Slot>
              <Slot $ml={354}><TableIcon /></Slot>
              <Slot $ml={15}><ShapeIcon /></Slot>
              <MuteLabel>Market Monitor</MuteLabel>
              <Slot $w={20}><ChevronDown size={15} /></Slot>
              <Slot $ml={223} $c="#a0a4b6"><FlameDial /></Slot>
              <BlueSquare $ml={73} />
            </Toolbar>
            <StageStrip>
              <StageBand $w={17} $c="#ffd6d3" />
              <StageBand $w={157} $c="#e2fdef" />
              <StageBand $w={1358} $c="#c9fde4" />
              <StageBand $w={86} $c="#fefee6" />
              <StageTag>DV - Stage Analysis</StageTag>
            </StageStrip>
            <StageRule />
            <PricePane viewBox="62 160 1814 1084">
              <Grid ticks={priceTicks} />
              <polyline points={maLong} fill="none" stroke="#a3a3a3" strokeWidth="1.6" />
              <polyline points={maMid} fill="none" stroke="#8f8f8f" strokeWidth="1.6" />
              <polyline points={emaLight} fill="none" stroke="#d0d0d0" strokeWidth="1.6" />
              <polyline points={emaDark} fill="none" stroke="#333" strokeWidth="1.6" />
              <line x1="73" x2="1766" y1="560" y2="560" stroke="#777" strokeWidth="1" strokeDasharray="1 1" />
              <path d={barPath} stroke="#000" strokeWidth="3.4" fill="none" />
              {levels.map(([y, a, b]) => (
                <line key={y} x1={a} x2={b} y1={y} y2={y} stroke="#fdb55c" strokeOpacity=".85" strokeWidth="4" />
              ))}
              <rect x="1766" y="551" width="37" height="19" rx="2" fill="#000" />
              <TagText x="1784.500" y="565" textAnchor="middle">IBIT</TagText>
            </PricePane>
            <Divider />
            <VolumePane viewBox="62 1246 1814 198">
              <Grid ticks={volTicks} />
              <VolumeTitle x="83" y="1269">Volume<tspan dx="9">47.46 M</tspan><tspan dx="9">42.14 M</tspan></VolumeTitle>
              <path d={volPath} stroke="#000" strokeWidth="4" fill="none" />
              <polyline points={volAvg} fill="none" stroke="#5a5a5a" strokeWidth="1.8" />
              {timeTicks.map(([t, x, b]) => (
                <AxisText key={t + x} x={x} y="1445" textAnchor="middle" $bold={b}>{t}</AxisText>
              ))}
              <path d="M1803 1435q-3 5 0 9" stroke="#bbb" fill="none" />
              <path d="M1839 1431l6 3.500v7l-6 3.500-6-3.500v-7zM1839 1436a2 2 0 1 0 .01 0z" stroke="#555" fill="none" strokeWidth="1.300" />
            </VolumePane>
            <DrawTools>
              <GripDots $c="#c9ccd8" $mr={12} />
              <DrawSlot><RectNodes /></DrawSlot>
              <DrawSlot><CandleTool /></DrawSlot>
              <DrawSlot><MessageSquare size={25} strokeWidth={1.4} /></DrawSlot>
              <DrawSlot><SegmentTool /></DrawSlot>
              <DrawSlot><Highlighter size={27} strokeWidth={1.3} /></DrawSlot>
            </DrawTools>
            <Ohlc><OhlcTitle>D · IBIT</OhlcTitle>O62.79 H62.83 L61.31 C61.44 -2.14 (-3.37%) Vol47.46 M</Ohlc>
            <Studies>
              <StudyRow>EMA<StudyValue $c="#4f5262">64.73</StudyValue></StudyRow>
              <StudyRow>EMA<StudyValue $c="#a9acb8">63.89</StudyValue></StudyRow>
              <StudyRow>MA<StudyValue $c="#777a88">64.68</StudyValue></StudyRow>
              <StudyRow>MA<StudyValue $c="#868997">56.88</StudyValue></StudyRow>
              <Collapse><ChevronUp size={14} strokeWidth={2.4} /></Collapse>
            </Studies>
          </ChartColumn>
          <SidePanel>
            <WatchPanel $h={503}>
              <PanelHead $h={42}>
                <Star size={16} strokeWidth={1.5} />
                <HeadTitle>Index ETFs</HeadTitle>
                <PanelEdge />
              </PanelHead>
              <HeadRow $h={39.500}>
                <SymbolHead><Check /><HeadSymbol>Symbol</HeadSymbol><Plus size={17} strokeWidth={1.6} /></SymbolHead>
                <HeadCell>% Change -<br />Today</HeadCell>
                <HeadCell>Run<br />Rate...</HeadCell>
                <HeadCell>% Change -<br />From Open</HeadCell>
                <HeadCell>Post<br />Market ...</HeadCell>
                <HeadCell $right>DCR</HeadCell>
                <HeadCell $noLine $right><Settings size={18} strokeWidth={1.5} /></HeadCell>
              </HeadRow>
              {indexRows.map((r) => <TableRow key={r.s} r={r} />)}
              <Spacer />
              <ResultsLine $pb={2}>9 of 1 results (0 selected)</ResultsLine>
            </WatchPanel>
            <WatchPanel $h={465}>
              <PanelHead $h={44}>
                <Star size={16} strokeWidth={1.5} />
                <HeadTitle>Liquid Mega Cap</HeadTitle>
                <PanelEdge />
              </PanelHead>
              <HeadRow $h={38}>
                <SymbolHead><Check /><HeadSymbol>Symbol</HeadSymbol><Plus size={17} strokeWidth={1.6} /></SymbolHead>
                <HeadCell $c="#3d7df0"><SortBadge>1</SortBadge><SortLabel>% Change<br />- Today</SortLabel><SortArrows /></HeadCell>
                <HeadCell>Run<br />Rate...</HeadCell>
                <HeadCell>% Change -<br />From Open</HeadCell>
                <HeadCell>Post<br />Market ...</HeadCell>
                <HeadCell $right>D<Spacer />1</HeadCell>
                <HeadCell $noLine $right><Settings size={18} strokeWidth={1.5} /></HeadCell>
              </HeadRow>
              {megaRows.map((r) => <TableRow key={r.s} r={r} tailMode />)}
              <Spacer />
              <ResultsLine $pb={1}>7 of 1 results (0 selected)</ResultsLine>
            </WatchPanel>
            <ThemePanel>
              <PanelHead $h={39}>
                <ThemeGlyph />
                <HeadTitle>Theme ETFs</HeadTitle>
                <HeadTitle $ml={24}><MoveHorizontal size={16} strokeWidth={1.5} style={{ verticalAlign: -3, marginRight: 10 }} />Price % Change from Open</HeadTitle>
                <HeadTitle $ml={25}><SortArrows /></HeadTitle>
                <DotsAbs><EllipsisVertical size={15} /></DotsAbs>
                <PanelEdge />
              </PanelHead>
              <ThemeRows>
                {themes.map(([s, w, v]) => {
                  const neg = v.startsWith("-");
                  return (
                    <ThemeRow key={s}>
                      <ThemeName><MiniPlay><PlayMark size={15} /></MiniPlay>{s}</ThemeName>
                      <ThemeBar $neg={neg} style={{ width: w }} />
                      <ThemeValue $neg={neg}>{v}</ThemeValue>
                    </ThemeRow>
                  );
                })}
              </ThemeRows>
              <ThemeFoot>50 results</ThemeFoot>
            </ThemePanel>
          </SidePanel>
        </Body>
      </Main>
    </Shell>
  );
}
